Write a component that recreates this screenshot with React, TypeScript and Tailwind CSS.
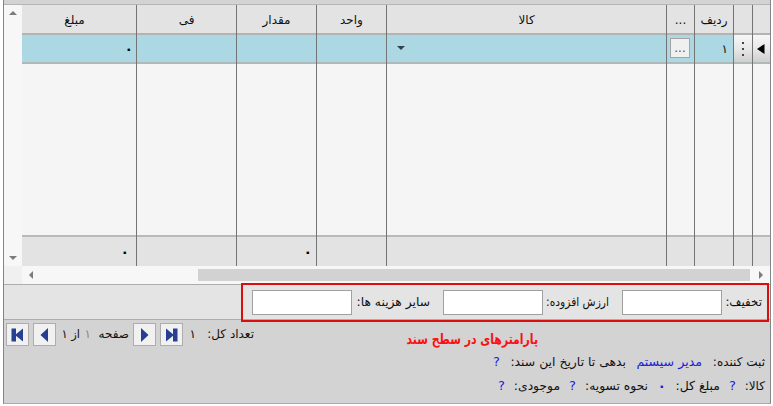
import React from "react";

const columns = [
  { w: "w-[115px]", title: "مبلغ", cell: "۰", total: "۰" },
  { w: "w-[100px]", title: "فی" },
  { w: "w-[80px]", title: "مقدار", total: "۰" },
  { w: "w-[70px]", title: "واحد" },
  { w: "w-[280px]", title: "کالا", kind: "combo" },
  { w: "w-[28px]", title: "...", kind: "more" },
  { w: "w-[39px]", title: "ردیف", cell: "۱" },
  { w: "w-[19px]", title: "", kind: "dots" },
  { w: "w-[17px]", title: "", kind: "current", last: true },
];

function Triangle({ points, w, h, fill = "#7b7b7b" }: { points: string; w: number; h: number; fill?: string }) {
  return (
    <svg width={w} height={h} viewBox={`0 0 ${w} ${h}`} className="block shrink-0">
      <polygon points={points} fill={fill} />
    </svg>
  );
}

function Label({ w, children, className = "" }: { w: string; children: React.ReactNode; className?: string }) {
  return (
    <span dir="rtl" className={`block shrink-0 whitespace-nowrap text-right ${w} ${className}`}>
      {children}
    </span>
  );
}

function Cell({ kind, value }: { kind?: string; value?: string }) {
  if (kind === "combo")
    return (
      <div className="flex h-full items-center pl-[10px] pb-[2px]">
        <Triangle points="0,0 8,0 4,4" w={8} h={4} fill="#33424a" />
      </div>
    );
  if (kind === "more")
    return (
      <div className="flex h-full items-start pt-[3px] pl-[3px]">
        <div className="h-5 w-5 border border-[#a5a5a5] bg-[#f0f0f0] text-center leading-[18px] text-[#555]">...</div>
      </div>
    );
  if (kind === "dots")
    return (
      <div className="flex h-full flex-col items-center justify-center gap-1 bg-linear-to-b from-[#f7f7f7] via-[#e8e8e8] to-[#cfcfcf]">
        <i className="size-[2px] bg-[#444]" />
        <i className="size-[2px] bg-[#444]" />
        <i className="size-[2px] bg-[#444]" />
      </div>
    );
  if (kind === "current")
    return (
      <div className="flex h-full items-center justify-start bg-linear-to-b from-[#f7f7f7] via-[#e8e8e8] to-[#cfcfcf] pl-[4px]">
        <Triangle points="0,5 7.5,0 7.5,10" w={8} h={10} fill="#000" />
      </div>
    );
  if (value === "۰") return <Zero className="pr-[3px]" />;
  return <div className="flex h-full items-center justify-end pr-[5px]">{value}</div>;
}

function Zero({ className = "" }: { className?: string }) {
  return <div className={`flex h-full items-center justify-end text-[14px] font-bold text-black ${className}`}>۰</div>;
}

function Grid() {
  return (
    <div className="flex h-[261px]">
      {columns.map((c, i) => (
        <div key={i} className={`flex shrink-0 flex-col ${c.w} ${c.last ? "" : "border-r border-[#747474]"}`}>
          <div className={`flex h-[28px] items-center justify-center bg-[#e3e3e3] pt-px ${i === 0 ? "pr-[9px]" : ""}`}>{c.title}</div>
          <div className="h-[2px] bg-[#b3b3b3]" />
          <div className="h-[27px] bg-[#acd8e4]">
            <Cell kind={c.kind} value={c.cell} />
          </div>
          <div className="h-[2px] bg-[#b0b8ba]" />
          <div className="h-[171px] bg-[#f5f5f5]" />
          <div className="h-[2px] bg-[#bababa]" />
          <div className="h-[29px] bg-[#e3e3e3]">{c.total && <Zero className={i ? "pr-[4px]" : "pr-[7px]"} />}</div>
        </div>
      ))}
    </div>
  );
}

function Field() {
  return <input className="h-[25px] w-[100px] shrink-0 border border-[#a0a0a0] bg-white outline-none" />;
}

function PageButton({ dir, edge }: { dir: "left" | "right"; edge?: boolean }) {
  return (
    <button className="flex h-[23px] w-[23px] shrink-0 items-center justify-center border border-[#adadad] bg-[#f1f1f1]">
      <svg width="13" height="14" viewBox="0 0 13 14" fill="#263f91" className={dir === "right" ? "" : "-scale-x-100"}>
        {edge ? (
          <>
            <polygon points="1,0.5 9,7 1,13.5" />
            <rect x="8" y="0.5" width="4.5" height="13" />
          </>
        ) : (
          <polygon points="3,0 10.5,7 3,14" />
        )}
      </svg>
    </button>
  );
}

export default function App() {
  return (
    <div dir="ltr" className="h-[406px] w-[773px] overflow-hidden bg-white pl-[3px] font-['DejaVu_Sans',sans-serif] text-[12px] leading-[16px] text-[#111]">
      <div className="h-[404px] w-[768px] border-x border-b border-[#858585] border-b-[#aaa] bg-[#d3d3d3]">
        <div className="h-[5px] border-b border-[#b5b5b5]" />
        <div className="flex h-[261px] w-[766px]">
          <div className="flex w-[18px] shrink-0 flex-col items-center justify-between bg-[#f7f7f7] pt-[6px] pb-[6px]">
            <Triangle points="0,4 8,4 4,0" w={8} h={4} />
            <Triangle points="0,0 8,0 4,4" w={8} h={4} />
          </div>
          <Grid />
        </div>
        <div className="flex h-[18px]">
          <div className="w-[18px] bg-[#f0f0f0]" />
          <div className="flex flex-1 items-center bg-[#f7f7f7] pl-[7px]">
            <Triangle points="0,4 4,0 4,8" w={4} h={8} />
            <div className="ml-[165px] h-3 w-[552px] bg-[#d2d2d2]" />
            <div className="ml-[9px]">
              <Triangle points="4,4 0,0 0,8" w={4} h={8} />
            </div>
          </div>
        </div>
        <div className="h-[36px] border-y border-[#adadad] bg-[#e4e4e4]">
          <div className="relative -top-[2px] ml-[237px] flex h-[39px] w-[528px] items-center border-2 border-[#d80f0f] pl-[9px]">
            <Field />
            <Label w="w-[78px]" className="pb-[2px] text-[12.3px]">سایر هزینه ها:</Label>
            <div className="w-[13px]" />
            <Field />
            <Label w="w-[66px]" className="pb-[2px] font-['DejaVu_Sans_Condensed','DejaVu_Sans',sans-serif] text-[11.9px]">ارزش افزوده:</Label>
            <div className="w-[13px]" />
            <Field />
            <Label w="w-[40px]" className="pb-[2px] text-[11.8px]">تخفیف:</Label>
          </div>
        </div>
        <div className="flex h-[27px] items-center pt-[2px] pl-[2px]">
          <PageButton dir="left" edge />
          <div className="w-1" />
          <PageButton dir="left" />
          <Label w="w-[24px]" className="pb-px text-[11.5px]">از ۱</Label>
          <Label w="w-[11px]" className="pb-px text-[#888]">۱</Label>
          <Label w="w-[38px]" className="pb-px">صفحه</Label>
          <div className="w-1" />
          <PageButton dir="right" />
          <div className="w-1" />
          <PageButton dir="right" edge />
          <Label w="w-[13px]" className="pb-px">۱</Label>
          <Label w="w-[58px]" className="pb-px">تعداد کل:</Label>
          <Label w="w-[284px]" className="origin-right scale-y-115 pt-[9px] font-['DejaVu_Sans_Condensed','DejaVu_Sans',sans-serif] text-[12.1px] font-bold text-[#fb1010]">پارامترهای در سطح سند</Label>
        </div>
        <div dir="rtl" className="mt-[3px] flex h-[24px] items-center pr-[5px]">
          <Label w="w-[63px]">ثبت کننده:</Label>
          <Label w="w-[76px]" className="text-[12.6px] text-[#2020dc]">مدیر سیستم</Label>
          <Label w="w-[126px]" className="text-[12.4px]">بدهی تا تاریخ این سند:</Label>
          <Label w="w-[10px]" className="text-[13px] text-[#2020dc]">?</Label>
        </div>
        <div dir="rtl" className="flex h-[24px] items-center pr-[5px]">
          <Label w="w-[29px]">کالا:</Label>
          <Label w="w-[16px]" className="text-[13px] text-[#2020dc]">?</Label>
          <Label w="w-[54px]" className="text-[12.4px]">مبلغ کل:</Label>
          <Label w="w-[18px]" className="text-[14px] font-bold text-[#2020dc]">۰</Label>
          <Label w="w-[72px]" className="text-[12.3px]">نحوه تسویه:</Label>
          <Label w="w-[16px]" className="text-[13px] text-[#2020dc]">?</Label>
          <Label w="w-[55px]" className="text-[12.3px]">موجودی:</Label>
          <Label w="w-[10px]" className="text-[13px] text-[#2020dc]">?</Label>
        </div>
      </div>
    </div>
  );
}
